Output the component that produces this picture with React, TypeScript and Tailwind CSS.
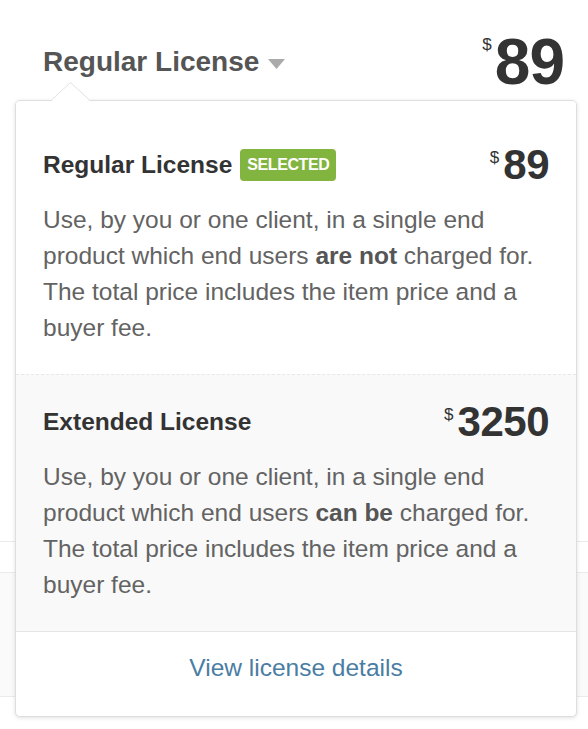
import React from "react";

type License = {
  name: string;
  price: string;
  selected?: boolean;
  pre: string;
  strong: string;
  post: string;
};

const LICENSES: License[] = [
  {
    name: "Regular License",
    price: "89",
    selected: true,
    pre: "Use, by you or one client, in a single end product which end users ",
    strong: "are not",
    post: " charged for. The total price includes the item price and a buyer fee.",
  },
  {
    name: "Extended License",
    price: "3250",
    pre: "Use, by you or one client, in a single end product which end users ",
    strong: "can be",
    post: " charged for. The total price includes the item price and a buyer fee.",
  },
];

function LicenseRow({ l, first }: { l: License; first: boolean }) {
  return (
    <div
      className={
        first
          ? "bg-white px-[27px] pt-[45px] pb-[28px]"
          : "bg-[#f9f9f9] border-t border-dashed border-[#e8e8e8] px-[27px] pt-[28px] pb-[28px]"
      }
    >
      <div className="flex items-center justify-between h-[38px]">
        <div className="flex items-center gap-[8px]">
          <span className="text-[24.5px] font-bold text-[#333]">{l.name}</span>
          {l.selected && (
            <span className="rounded-[4px] bg-[#82b440] px-[7px] h-[32px] flex items-center text-[16px] font-bold uppercase text-white tracking-[-0.4px]">
              Selected
            </span>
          )}
        </div>
        <div className="flex items-start font-bold text-[#333]">
          <span className="text-[17px] font-normal leading-none mt-[5px] mr-[4px]">$</span>
          <span className="text-[42px] leading-none tracking-[-0.5px]">{l.price}</span>
        </div>
      </div>
      <p className="mt-[18px] text-[24.5px] leading-[36px] text-[#636363]">
        {l.pre}
        <strong className="font-bold text-[#555]">{l.strong}</strong>
        {l.post}
      </p>
    </div>
  );
}

export default function App() {
  return (
    <div
      className="relative h-[729px] w-[588px] overflow-hidden bg-white"
      style={{ fontFamily: '"Liberation Sans", Arial, sans-serif' }}
    >
      {/* header */}
      <div className="flex items-start justify-between pl-[43px] pr-[24px] pt-[30px]">
        <button className="mt-[17px] flex items-center gap-[9px] text-[28px] font-bold text-[#555] leading-[30px]">
          Regular License
          <svg width="17" height="10" viewBox="0 0 17 10" className="mt-[4px]">
            <path d="M0 0h17L8.5 10z" fill="#aaa" />
          </svg>
        </button>
        <div className="flex items-start font-bold text-[#333]">
          <span className="text-[17px] font-normal leading-none mt-[6px] mr-[3px]">$</span>
          <span className="text-[64px] leading-none tracking-[-1px]">89</span>
        </div>
      </div>

      {/* page content behind the dropdown */}
      <div className="mt-[447px] border-t border-[#ebebeb] h-[31px]" />
      <div className="h-[125px] border-t border-b border-[#ebebeb] bg-[#fafafa]" />

      {/* dropdown */}
      <div className="absolute left-[15px] top-[100px] w-[562px]">
        <svg
          width="40"
          height="19"
          viewBox="0 0 40 19"
          className="absolute left-[36px] -top-[18px] z-10"
        >
          <path d="M0 18.5L19.5 0.5L39 18.5" fill="white" stroke="#e2e2e2" strokeWidth="1" />
          <rect x="1" y="18" width="37" height="2" fill="white" />
        </svg>
        <div className="overflow-hidden rounded-[5px] border border-[#dedede] bg-white shadow-[0_1px_4px_rgba(0,0,0,0.12)]">
          {LICENSES.map((l, i) => (
            <LicenseRow key={l.name} l={l} first={i === 0} />
          ))}
          <div className="border-t border-[#e5e5e5] pt-[20px] pb-[32px] text-center">
            <a className="text-[24.5px] leading-[32px] text-[#4a7da3]">View license details</a>
          </div>
        </div>
      </div>
    </div>
  );
}
